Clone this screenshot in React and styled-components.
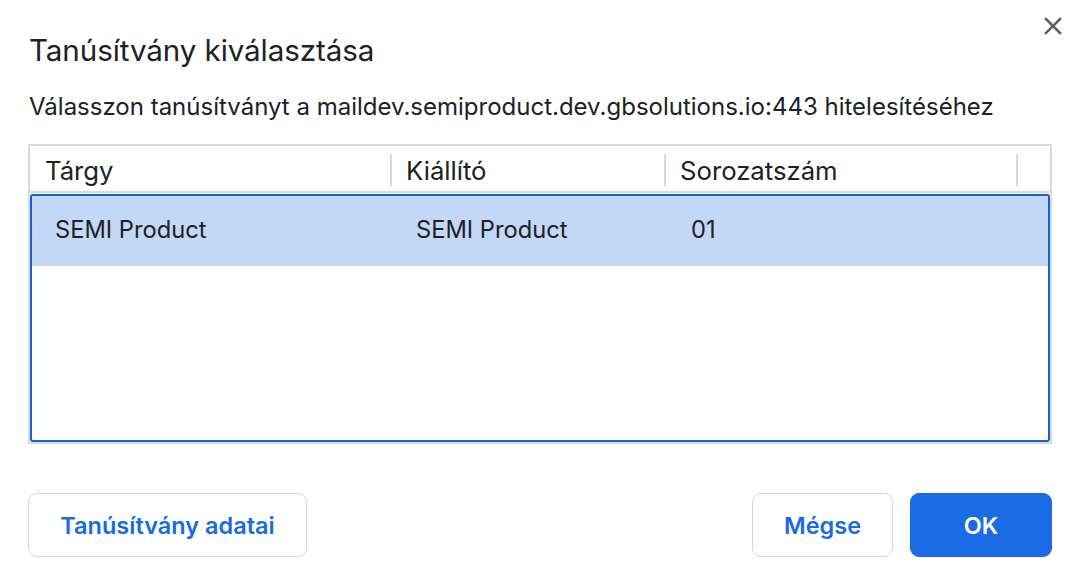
import styled, { createGlobalStyle } from 'styled-components'

const GlobalStyle = createGlobalStyle`
  html, body {
    margin: 0;
    padding: 0;
    background: #ffffff;
  }
  body {
    font-family: Inter, "Noto Sans", sans-serif;
    color: #202124;
  }
`

const Dialog = styled.div`
  width: 1082px;
  height: 582px;
  box-sizing: border-box;
  padding: 0 30px 0 28px;
  display: flex;
  flex-direction: column;
`

const TitleBar = styled.div`
  display: flex;
  justify-content: space-between;
  align-items: flex-start;
  height: 88px;
`

const Title = styled.h1`
  margin: 32px 0 0 1px;
  font-size: 29.6px;
  font-weight: 400;
  line-height: 36px;
  letter-spacing: -0.1px;
`

const CloseButton = styled.button`
  margin: 15px -12px 0 0;
  width: 22px;
  height: 22px;
  padding: 0;
  border: none;
  background: none;
  color: #5f6368;
  display: flex;
  align-items: center;
  justify-content: center;
`

const Description = styled.p`
  margin: 0 0 0 1px;
  font-size: 24px;
  line-height: 38px;
  height: 56px;
`

const Table = styled.div`
  border: 2px solid #d9dadc;
  height: 300px;
  box-sizing: border-box;
  display: flex;
  flex-direction: column;
`

const Columns = styled.div`
  display: grid;
  grid-template-columns: 360px 274px 352px 1fr;
`

const HeaderRow = styled(Columns)`
  height: 45px;
  border-bottom: 2px solid #d9dadc;
  flex-shrink: 0;
`

const HeaderCell = styled.div`
  display: flex;
  align-items: center;
  padding-left: ${p => (p.$first ? 15 : 16)}px;
  padding-top: 3px;
  font-size: 25.7px;
  position: relative;

  &::before {
    content: '';
    display: ${p => (p.$first ? 'none' : 'block')};
    position: absolute;
    left: 0;
    top: 8px;
    bottom: 5px;
    width: 2px;
    background: #d9dadc;
  }
`

const Body = styled.div`
  flex: 1;
  border: 2px solid #1a5fd1;
  border-radius: 3px;
  margin-top: 1px;
`

const Row = styled(Columns)`
  height: 70px;
  background: ${p => (p.$selected ? '#c3d8f6' : 'transparent')};
  grid-template-columns: 361px 275px 352px 1fr;
`

const Cell = styled.div`
  display: flex;
  align-items: center;
  padding-left: 23px;
  padding-bottom: 3px;
  font-size: 23.7px;
`

const Footer = styled.div`
  margin-top: 49px;
  display: flex;
  align-items: center;
  gap: 17px;
`

const Spacer = styled.div`
  flex: 1;
`

const Button = styled.button`
  height: 64px;
  padding: 0 ${p => p.$pad || 0}px;
  border-radius: 9px;
  font-family: Inter, "Noto Sans", sans-serif;
  font-size: 23.5px;
  font-weight: 600;
  border: 1.5px solid ${p => (p.$primary ? '#1b6be5' : '#d6d7d9')};
  background: ${p => (p.$primary ? '#1b6be5' : '#ffffff')};
  color: ${p => (p.$primary ? '#ffffff' : '#1a6ae2')};
  min-width: ${p => p.$min || 0}px;
`

const columns = ['Tárgy', 'Kiállító', 'Sorozatszám', '']

export default function App() {
  return (
    <>
      <GlobalStyle />
      <Dialog>
        <TitleBar>
          <Title>Tanúsítvány kiválasztása</Title>
          <CloseButton aria-label="Bezárás">
            <svg width="18" height="18" viewBox="0 0 18 18">
              <path d="M2 2 L16 16 M16 2 L2 16" stroke="currentColor" strokeWidth="2.6" strokeLinecap="square" />
            </svg>
          </CloseButton>
        </TitleBar>
        <Description>
          Válasszon tanúsítványt a maildev.semiproduct.dev.gbsolutions.io:443 hitelesítéséhez
        </Description>
        <Table>
          <HeaderRow>
            {columns.map((c, i) => (
              <HeaderCell key={i} $first={i === 0}>{c}</HeaderCell>
            ))}
          </HeaderRow>
          <Body>
            <Row $selected>
              <Cell>SEMI Product</Cell>
              <Cell>SEMI Product</Cell>
              <Cell>01</Cell>
              <Cell />
            </Row>
          </Body>
        </Table>
        <Footer>
          <Button $pad={30} $min={279}>Tanúsítvány adatai</Button>
          <Spacer />
          <Button $min={141}>Mégse</Button>
          <Button $primary $min={142}>OK</Button>
        </Footer>
      </Dialog>
    </>
  )
}
